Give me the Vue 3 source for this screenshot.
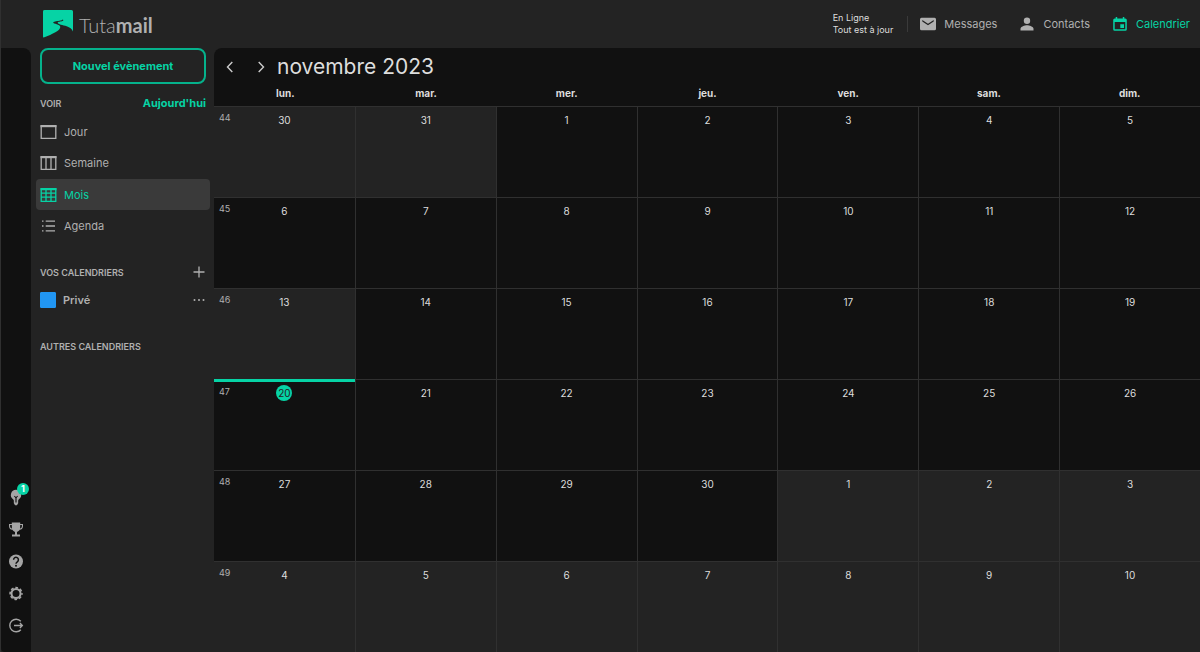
<template>
  <div class="app">
    <header class="topbar">
      <a href="#" class="logo">
        <svg class="logo-mark" viewBox="0 0 30 28">
          <path d="M1.500 0h27A1.500 1.500 0 0 1 30 1.500V21.500c-1-2.600-3.200-4.300-6.300-5.300-3.600-1.100-9-1.800-9-3.400 0-1 3-1 4.800-1.700 1.200-.5.900-1.300 0-1.900.4.900-.8 1.200-3 1.500-3.200.4-6.300.7-6.300 1.900 0 1.500 7.100 1.600 7.100 4.300 0 3.500-7.500 7-16.600 10.500-.4.100-.7-.1-.7-.6V1.500A1.500 1.500 0 0 1 1.500 0z" />
        </svg>
        <span class="logo-text">Tuta<b>mail</b></span>
      </a>
      <div class="topbar-right">
        <div class="status">
          <div>En Ligne</div>
          <div>Tout est à jour</div>
        </div>
        <nav class="main-nav">
          <a href="#" class="nav-link">
            <svg class="nav-icon" viewBox="0 0 16 16">
              <path fill-rule="evenodd" d="M1.500 1.700h13A1.500 1.500 0 0 1 16 3.200v9.600a1.500 1.500 0 0 1-1.500 1.500h-13A1.500 1.500 0 0 1 0 12.800V3.200a1.500 1.500 0 0 1 1.500-1.500zM2.300 4v1.500L8 9.300l5.700-3.800V4L8 7.700z" />
            </svg>
            Messages
          </a>
          <a href="#" class="nav-link">
            <svg class="nav-icon" viewBox="0 0 16 16">
              <circle cx="8" cy="4.800" r="3.200" />
              <path d="M1.500 14.500v-1.700c0-2.300 4.300-3.500 6.500-3.500s6.500 1.200 6.500 3.500v1.700z" />
            </svg>
            Contacts
          </a>
          <a href="#" class="nav-link active">
            <svg class="nav-icon" viewBox="0 0 16 16">
              <path fill-rule="evenodd" d="M3.700 1h1.500v1.500h5.600V1h1.500v1.500h1A1.500 1.500 0 0 1 14.800 4v9.200a1.500 1.500 0 0 1-1.500 1.500H2.700a1.500 1.500 0 0 1-1.500-1.500V4a1.500 1.500 0 0 1 1.500-1.500h1zM2.700 6v7.200h10.600V6zM8.300 8.300h3.700V12H8.300z" />
            </svg>
            Calendrier
          </a>
        </nav>
      </div>
    </header>

    <div class="body">
      <aside class="rail">
        <button class="rail-btn" aria-label="Nouveautés">
          <svg class="rail-icon" viewBox="0 0 16 18">
            <path fill-rule="evenodd" d="M8 .8a5.500 5.500 0 0 1 3.100 10c-.6.5-.8 1-.8 1.700V15L9 17.300H7L5.700 15v-2.500c0-.7-.2-1.200-.8-1.700A5.500 5.500 0 0 1 8 .8zM5.900 7.600l1.500 1.900v4.700h1.200V9.500l1.500-1.900-.6-.4L8 8.400 6.500 7.200z" />
          </svg>
          <span class="badge">1</span>
        </button>
        <button class="rail-btn" aria-label="Mise à niveau">
          <svg class="rail-icon" viewBox="0 0 16 16">
            <path fill-rule="evenodd" d="M3.800 1h8.400v1.400H15v2.400c0 2-1.300 3.300-3.300 3.500-.6 1.100-1.500 1.800-2.700 2.100v2.600h3V15H4v-2h3v-2.600c-1.200-.3-2.100-1-2.700-2.100C2.300 8.100 1 6.800 1 4.800V2.400h2.800zM2.100 3.500v1.300c0 1.200.7 2 1.800 2.300l-.1-3.600zm10.100 0-.1 3.600c1.100-.3 1.800-1.100 1.800-2.300V3.500z" />
          </svg>
        </button>
        <button class="rail-btn" aria-label="Aide">
          <svg class="rail-icon" viewBox="0 0 16 16">
            <circle cx="8" cy="8" r="7" />
            <path class="cut" d="M5.600 6.300a2.400 2.400 0 1 1 3.700 2C8.400 8.900 8 9.300 8 10.200" />
            <circle class="cut-dot" cx="8" cy="12.200" r="1" />
          </svg>
        </button>
        <button class="rail-btn" aria-label="Paramètres">
          <svg class="rail-icon line" viewBox="0 0 16 16">
            <circle cx="8" cy="8" r="4.500" stroke-width="2" />
            <circle cx="8" cy="8" r="5.900" stroke-width="1.600" stroke-dasharray="2.700 1.934" stroke-dashoffset="1.350" />
          </svg>
        </button>
        <button class="rail-btn" aria-label="Déconnexion">
          <svg class="rail-icon line" viewBox="0 0 16 16">
            <path stroke-width="1.400" d="M12.800 3.800a6.300 6.300 0 1 0 0 8.400M6 8h8.300M11.900 5.600 14.300 8l-2.400 2.400" />
          </svg>
        </button>
      </aside>

      <aside class="sidebar">
        <button class="new-event">Nouvel évènement</button>
        <div class="section-head">
          <h2>VOIR</h2>
          <button class="today-btn">Aujourd'hui</button>
        </div>
        <ul class="views">
          <li v-for="view in views" :key="view.label">
            <a href="#" class="view" :class="{ active: view.label === currentView }">
              <svg class="view-icon" viewBox="0 0 17 16">
                <path :d="view.icon" />
                <path v-if="view.label !== 'Agenda'" class="thick" d="M.5 2.200h16" />
              </svg>
              {{ view.label }}
            </a>
          </li>
        </ul>
        <div class="section-head calendars-head">
          <h2>VOS CALENDRIERS</h2>
          <button class="icon-btn" aria-label="Ajouter un calendrier">
            <svg viewBox="0 0 14 14"><path d="M7 1.500v11M1.500 7h11" /></svg>
          </button>
        </div>
        <div class="calendar-row">
          <label class="calendar-label">
            <input v-model="privateShown" type="checkbox">
            Privé
          </label>
          <button class="icon-btn dots" aria-label="Plus">
            <svg viewBox="0 0 14 14">
              <circle cx="2.500" cy="7" r="1" />
              <circle cx="7" cy="7" r="1" />
              <circle cx="11.500" cy="7" r="1" />
            </svg>
          </button>
        </div>
        <div class="section-head others-head">
          <h2>AUTRES CALENDRIERS</h2>
        </div>
      </aside>

      <main class="calendar">
        <div class="month-bar">
          <button class="arrow" aria-label="Mois précédent">
            <svg viewBox="0 0 16 16"><path d="M10.300 3 5.500 8l4.800 5" /></svg>
          </button>
          <button class="arrow" aria-label="Mois suivant">
            <svg viewBox="0 0 16 16"><path d="M5.700 3l4.800 5-4.800 5" /></svg>
          </button>
          <h1>novembre 2023</h1>
        </div>
        <div class="weekdays">
          <div v-for="day in weekdays" :key="day">{{ day }}</div>
        </div>
        <div class="grid">
          <template v-for="week in weeks" :key="week.number">
            <div
              v-for="(day, i) in week.days"
              :key="i"
              class="cell"
              :class="{ dim: day.dim, today: day.today }"
            >
              <span v-if="i === 0" class="week-number">{{ week.number }}</span>
              <span class="day">{{ day.date }}</span>
            </div>
          </template>
        </div>
      </main>
    </div>
  </div>
</template>

<script setup>
import { ref } from 'vue';

const currentView = ref('Mois');
const privateShown = ref(true);

const views = [
  { label: 'Jour', icon: 'M1.200 1.700h14.600v12.600H1.200z' },
  { label: 'Semaine', icon: 'M1.200 1.700h14.600v12.600H1.200zM6 2v12M11 2v12' },
  { label: 'Mois', icon: 'M1.200 1.700h14.600v12.600H1.200zM6 2v12M11 2v12M1.500 6.200h14M1.500 10.200h14' },
  { label: 'Agenda', icon: 'M2 3.200h1.500M5.700 3.200h9.300M2 8h1.500M5.700 8h9.300M2 12.800h1.500M5.700 12.800h9.300' }
];

const weekdays = ['lun.', 'mar.', 'mer.', 'jeu.', 'ven.', 'sam.', 'dim.'];

// 30 octobre 2023 is the first monday shown
const weeks = Array.from({ length: 6 }, (_, w) => ({
  number: 44 + w,
  days: Array.from({ length: 7 }, (_, d) => {
    const date = new Date(2023, 9, 30 + w * 7 + d);
    const inMonth = date.getMonth() === 10;
    return {
      date: date.getDate(),
      dim: !inMonth || (w === 2 && d === 0),
      today: inMonth && date.getDate() === 20
    };
  })
}));
</script>

<style>
body {
  background: #222;
}
</style>

<style scoped>
.app {
  min-height: 100vh;
  display: flex;
  flex-direction: column;
  box-sizing: border-box;
  border-left: 1px solid #303030;
  background: #232323;
  color: #b0b0b0;
  font-family: Inter, "Liberation Sans", sans-serif;
  font-size: 11px;
}
button {
  padding: 0;
  border: none;
  background: none;
  color: inherit;
  font: inherit;
  cursor: pointer;
}
a {
  color: inherit;
  text-decoration: none;
}
h1,
h2 {
  margin: 0;
}
svg {
  display: block;
  flex: none;
}
.topbar {
  height: 48px;
  display: flex;
  justify-content: space-between;
  align-items: center;
  padding: 0 10px 0 42px;
}
.logo {
  display: flex;
  align-items: center;
  gap: 6px;
}
.logo-mark {
  width: 30px;
  height: 28px;
  fill: #06d3a5;
}
.logo-text {
  font-family: Lato, sans-serif;
  font-size: 20px;
  font-weight: 300;
  line-height: 28px;
  padding-top: 2px;
}
.logo-text b {
  font-weight: 700;
}
.topbar-right {
  display: flex;
  align-items: center;
}
.status {
  color: #ddd;
  font-size: 9px;
  line-height: 12px;
  padding-right: 14px;
}
.main-nav {
  display: flex;
  align-items: center;
  gap: 22px;
  height: 16px;
  padding-left: 12px;
  border-left: 1px solid #3a3a3a;
}
.nav-link {
  display: flex;
  align-items: center;
  gap: 8px;
}
.nav-icon {
  width: 16px;
  height: 16px;
  fill: currentColor;
}
.active {
  color: #06d3a5;
}
.body {
  flex: 1;
  display: flex;
}
.rail {
  width: 30px;
  display: flex;
  flex-direction: column;
  justify-content: flex-end;
  align-items: center;
  padding-bottom: 11px;
  box-sizing: border-box;
  background: #111;
  border-radius: 0 8px 0 4px;
}
.rail-btn {
  position: relative;
  width: 30px;
  height: 32px;
  display: flex;
  align-items: center;
  justify-content: center;
  color: #a5a5a5;
}
.rail-icon {
  width: 16px;
  height: 17px;
  fill: currentColor;
}
.rail-icon.line {
  fill: none;
  stroke: currentColor;
}
.cut {
  fill: none;
  stroke: #111;
  stroke-width: 1.500;
}
.cut-dot {
  fill: #111;
}
.badge {
  position: absolute;
  top: 2px;
  right: 2px;
  width: 12px;
  height: 12px;
  border-radius: 50%;
  background: #06d3a5;
  color: #fff;
  font-size: 9px;
  font-weight: 700;
  line-height: 12px;
  text-align: center;
}
.sidebar {
  width: 183px;
  box-sizing: border-box;
  padding: 0 4px 0 5px;
}
.new-event {
  display: block;
  width: 166px;
  height: 36px;
  margin-left: 4px;
  border: 2px solid #05b28c;
  border-radius: 8px;
  color: #06d3a5;
  font-weight: 700;
}
.section-head {
  display: flex;
  justify-content: space-between;
  align-items: center;
  height: 24px;
  padding: 0 4px;
  margin-top: 7px;
}
.section-head h2 {
  font-size: 9px;
  font-weight: 600;
}
.today-btn {
  color: #06d3a5;
  font-weight: 700;
}
.views {
  display: grid;
  grid-template-rows: repeat(4, 1fr);
  height: 126px;
  margin: 1px 0 0;
  padding: 0;
  list-style: none;
}
.view {
  display: flex;
  align-items: center;
  gap: 7px;
  height: 31px;
  padding: 0 4px;
  border-radius: 4px;
}
.view.active {
  background: #3a3a3a;
}
.view-icon {
  width: 17px;
  height: 16px;
  fill: none;
  stroke: currentColor;
  stroke-width: 1.300;
}
.thick {
  stroke-width: 2;
}
.calendars-head {
  margin-top: 18px;
}
.icon-btn svg {
  width: 14px;
  height: 14px;
  stroke: currentColor;
  stroke-width: 1.300;
}
.dots svg {
  fill: currentColor;
  stroke: none;
}
.calendar-row {
  display: flex;
  justify-content: space-between;
  align-items: center;
  height: 32px;
  padding: 0 4px;
}
.calendar-label {
  display: flex;
  align-items: center;
  gap: 7px;
  font-weight: 600;
}
.calendar-label input {
  appearance: none;
  width: 16px;
  height: 16px;
  margin: 0;
  border: 1px solid #2196f3;
  border-radius: 1px;
}
.calendar-label input:checked {
  background: #2196f3;
}
.others-head {
  margin-top: 18px;
}
.calendar {
  flex: 1;
  display: flex;
  flex-direction: column;
  background: #111;
  border-radius: 8px 0 0 0;
}
.month-bar {
  display: flex;
  align-items: center;
  height: 37px;
  padding-left: 8px;
}
.arrow {
  width: 16px;
  height: 16px;
  margin-right: 15px;
}
.arrow + .arrow {
  margin-right: 8px;
}
.arrow svg {
  width: 16px;
  height: 16px;
  fill: none;
  stroke: #ccc;
  stroke-width: 1.400;
}
.month-bar h1 {
  color: #ddd;
  font-size: 21px;
  font-weight: 400;
}
.weekdays {
  display: grid;
  grid-template-columns: repeat(7, 1fr);
  height: 21px;
  padding-left: 1px;
  line-height: 16px;
  color: #ddd;
  font-size: 10px;
  font-weight: 700;
  text-align: center;
}
.grid {
  flex: 1;
  display: grid;
  grid-template-columns: repeat(7, 1fr);
  grid-template-rows: repeat(6, minmax(64px, 1fr));
}
.cell {
  position: relative;
  box-sizing: border-box;
  padding-top: 5px;
  border-top: 1px solid #303030;
  border-left: 1px solid #303030;
  text-align: center;
}
.cell:nth-child(7n + 1) {
  border-left: none;
}
.cell.dim {
  background: #232323;
}
.cell.today {
  border-top: 3px solid #06d3a5;
  padding-top: 3px;
}
.day {
  display: inline-block;
  width: 16px;
  height: 16px;
  border-radius: 50%;
  color: #ddd;
  font-size: 10px;
  line-height: 16px;
}
.today .day {
  background: #06d3a5;
  color: #222;
}
.week-number {
  position: absolute;
  top: 5px;
  left: 5px;
  font-size: 9px;
  line-height: 12px;
}
.today .week-number {
  top: 4px;
}
</style>
